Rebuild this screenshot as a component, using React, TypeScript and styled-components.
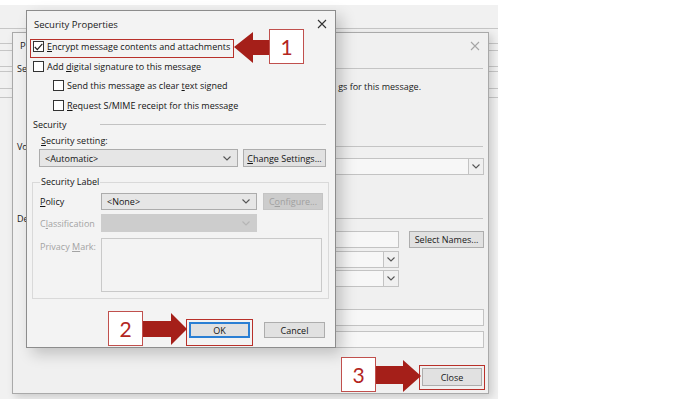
import React from "react";
import styled, { createGlobalStyle } from "styled-components";

const Global = createGlobalStyle`
  html, body { margin: 0; padding: 0; background: #ffffff; }
  body { font-family: "Open Sans", "Noto Sans", sans-serif; }
  * { box-sizing: border-box; }
`;

const Desktop = styled.div`
  position: relative;
  width: 700px;
  height: 399px;
  overflow: hidden;
  background: #ffffff;
`;

/* ---------- outer (backmost) window ---------- */
const Backdrop = styled.div`
  position: absolute;
  left: 0;
  top: 5px;
  width: 498px;
  height: 394px;
  background: #f1f1f1;
  display: flex;
  flex-direction: column;
`;

const BackLine = styled.div<{ $mt: number }>`
  flex: none;
  height: 1px;
  background: #c6c6c6;
  margin-top: ${(p) => p.$mt}px;
`;

/* ---------- shared window parts ---------- */
const TitleBar = styled.div<{ $h: number; $pl: number }>`
  flex: none;
  height: ${(p) => p.$h}px;
  display: flex;
  align-items: center;
  justify-content: space-between;
  padding: 0 8px 0 ${(p) => p.$pl}px;
`;

const TitleText = styled.span`
  font-size: 9.5px;
  color: #1a1a1a;
  white-space: nowrap;
`;

/* the part of a label that peeks out from under the front dialog */
const Peek = styled.span`
  flex: none;
  white-space: nowrap;
`;

const CloseGlyph = styled.svg<{ $faded?: boolean }>`
  width: 10px;
  height: 10px;
  stroke: ${(p) => (p.$faded ? "#a5a5a5" : "#333")};
  stroke-width: 1.1;
`;

/* a caption with one access-key letter underlined */
const Caption = styled.span`
  display: inline-flex;
  white-space: pre;
`;

const Key = styled.span`
  text-decoration: underline;
  text-underline-offset: 1px;
  text-decoration-thickness: 1px;
`;

const Mnemonic = ({ pre = "", k, post = "" }: { pre?: string; k: string; post?: string }) => (
  <Caption>
    {pre && <span>{pre}</span>}
    <Key>{k}</Key>
    {post && <span>{post}</span>}
  </Caption>
);

/* ---------- properties window (middle) ---------- */
const PropWindow = styled.div`
  position: absolute;
  left: 12px;
  top: 32px;
  width: 477px;
  height: 362px;
  background: #f0f0f0;
  border: 1px solid #a9a9a9;
  box-shadow: 3px 3px 8px rgba(0, 0, 0, 0.16);
  display: flex;
  flex-direction: column;
  font-size: 9px;
  color: #1a1a1a;
`;

const SectionHead = styled.div<{ $mt: number }>`
  flex: none;
  height: 20px;
  margin-top: ${(p) => p.$mt}px;
  display: flex;
  align-items: center;
  gap: 6px;
  padding: 0 5px 0 4px;
`;

const SectionLine = styled.div`
  flex: 1;
  height: 1px;
  background: #c4c4c4;
`;

const PropRow = styled.div<{ $mt: number; $h: number }>`
  flex: none;
  height: ${(p) => p.$h}px;
  margin-top: ${(p) => p.$mt}px;
  display: flex;
  align-items: center;
  justify-content: flex-end;
  gap: 10px;
  padding: 0 4px 0 16px;
`;

const InfoText = styled.span`
  margin-right: 63px;
  white-space: nowrap;
`;

const Field = styled.div<{ $w: number }>`
  flex: none;
  width: ${(p) => p.$w}px;
  height: 100%;
  background: #f7f7f7;
  border: 1px solid #c3c3c3;
  display: flex;
  align-items: stretch;
  justify-content: flex-end;
`;

const Spacer = styled.div<{ $w: number }>`
  flex: none;
  width: ${(p) => p.$w}px;
`;

const ChevBox = styled.div`
  width: 15px;
  border-left: 1px solid #c3c3c3;
  display: flex;
  align-items: center;
  justify-content: center;
  background: #f0f0f0;
`;

const Chev = styled.svg<{ $c?: string }>`
  width: 8px;
  height: 5px;
  fill: none;
  stroke: ${(p) => p.$c || "#555"};
  stroke-width: 1.1;
`;

const PlainButton = styled.div<{ $w: number }>`
  flex: none;
  width: ${(p) => p.$w}px;
  height: 100%;
  background: #e1e1e1;
  border: 1px solid #adadad;
  display: flex;
  align-items: center;
  justify-content: center;
  font-size: 9px;
  color: #1a1a1a;
`;

const FootRow = styled.div`
  flex: none;
  height: 18px;
  margin-top: 20px;
  display: flex;
  justify-content: flex-end;
  padding-right: 6px;
`;

/* ---------- security properties dialog (front) ---------- */
const Dialog = styled.div`
  position: absolute;
  left: 26px;
  top: 10px;
  width: 310px;
  height: 338px;
  background: #f3f3f3;
  border: 1px solid #8c8c8c;
  box-shadow: 6px 6px 14px rgba(0, 0, 0, 0.2);
  display: flex;
  flex-direction: column;
  font-size: 9px;
  color: #141414;
`;

const CheckRow = styled.div<{ $indent: number }>`
  flex: none;
  height: 19.5px;
  display: flex;
  align-items: center;
  gap: 3px;
  padding-left: ${(p) => p.$indent}px;
  white-space: nowrap;
`;

const Box = styled.span`
  flex: none;
  width: 11px;
  height: 11px;
  background: #fff;
  border: 1px solid #333;
  display: flex;
  align-items: center;
  justify-content: center;
`;

const Tick = styled.svg`
  width: 9px;
  height: 8px;
  fill: none;
  stroke: #222;
  stroke-width: 1.2;
`;

const GroupHead = styled.div`
  flex: none;
  height: 18px;
  display: flex;
  align-items: center;
  padding: 0 9px 0 6px;
`;

const GroupTitle = styled.span`
  width: 67px;
`;

const GroupLine = styled.div`
  flex: 1;
  height: 1px;
  background: #c2c2c2;
`;

const SubLabel = styled.div`
  flex: none;
  height: 14px;
  display: flex;
  align-items: center;
  padding-left: 14px;
`;

const ComboRow = styled.div`
  flex: none;
  height: 18px;
  margin-top: 2px;
  display: flex;
  gap: 5px;
  padding-left: 12px;
`;

const Combo = styled.div<{ $w: number; $disabled?: boolean }>`
  flex: none;
  width: ${(p) => p.$w}px;
  height: 100%;
  background: ${(p) => (p.$disabled ? "#cdcdcd" : "#e6e6e6")};
  border: 1px solid ${(p) => (p.$disabled ? "#cdcdcd" : "#acacac")};
  display: flex;
  align-items: center;
  justify-content: space-between;
  padding: 0 6px 0 5px;
  color: #141414;
`;

const DlgButton = styled.div<{ $w: number; $disabled?: boolean; $default?: boolean }>`
  flex: none;
  width: ${(p) => p.$w}px;
  height: 100%;
  background: ${(p) => (p.$disabled ? "#cccccc" : "#e1e1e1")};
  border: 1px solid
    ${(p) => (p.$default ? "#2a7fd4" : p.$disabled ? "#c4c4c4" : "#adadad")};
  box-shadow: ${(p) => (p.$default ? "inset 0 0 0 1px #2a7fd4" : "none")};
  color: ${(p) => (p.$disabled ? "#a0a0a0" : "#141414")};
  display: flex;
  align-items: center;
  justify-content: center;
  white-space: nowrap;
`;

const LabelGroup = styled.fieldset`
  flex: none;
  width: 297px;
  margin: 8px 0 0 5px;
  padding: 4px 6px 6px 7px;
  border: 1px solid #d9d9d9;
  display: flex;
  flex-direction: column;
  min-inline-size: 0;
`;

const Legend = styled.legend`
  padding: 0 1px;
  line-height: 14px;
  font-size: 9px;
  color: #141414;
`;

const LabelRow = styled.div<{ $mt: number; $h: number }>`
  height: ${(p) => p.$h}px;
  margin-top: ${(p) => p.$mt}px;
  display: flex;
  align-items: flex-start;
  gap: 6px;
`;

const RowName = styled.span<{ $disabled?: boolean; $h: number }>`
  flex: none;
  width: 55px;
  height: ${(p) => p.$h}px;
  display: flex;
  align-items: center;
  color: ${(p) => (p.$disabled ? "#a3a3a3" : "#141414")};
  white-space: nowrap;
`;

const Memo = styled.div`
  width: 223px;
  height: 100%;
  border: 1px solid #c9c9c9;
  background: #f3f3f3;
`;

const ButtonRow = styled.div`
  flex: none;
  height: 16px;
  margin-top: 23px;
  display: flex;
  justify-content: flex-end;
  gap: 14px;
  padding-right: 10px;
`;

/* ---------- annotations ---------- */
const Highlight = styled.div<{ $x: number; $y: number; $w: number; $h: number }>`
  position: absolute;
  left: ${(p) => p.$x}px;
  top: ${(p) => p.$y}px;
  width: ${(p) => p.$w}px;
  height: ${(p) => p.$h}px;
  border: 1.5px solid #b8302a;
`;

const StepBadge = styled.div<{ $x: number; $y: number }>`
  position: absolute;
  left: ${(p) => p.$x}px;
  top: ${(p) => p.$y}px;
  width: 35px;
  height: 35px;
  background: #fff;
  border: 1px solid #c0504d;
  display: flex;
  align-items: center;
  justify-content: center;
  font-family: "Lato", "Open Sans", sans-serif;
  font-size: 21px;
  color: #b3261e;
`;

const Arrow = styled.svg<{ $x: number; $y: number }>`
  position: absolute;
  left: ${(p) => p.$x}px;
  top: ${(p) => p.$y}px;
  overflow: visible;
`;

const X = ({ faded }: { faded?: boolean }) => (
  <CloseGlyph viewBox="0 0 10 10" $faded={faded}>
    <path d="M1 1 L9 9 M9 1 L1 9" />
  </CloseGlyph>
);

const Down = ({ c }: { c?: string }) => (
  <Chev viewBox="0 0 8 5" $c={c}>
    <path d="M0.5 0.5 L4 4 L7.5 0.5" />
  </Chev>
);

const Check = ({ checked }: { checked?: boolean }) => (
  <Box>
    {checked && (
      <Tick viewBox="0 0 9 8">
        <path d="M0.8 4 L3.3 6.6 L8.3 0.8" />
      </Tick>
    )}
  </Box>
);

const arrowFill = "#a51f19";

export default function App() {
  return (
    <Desktop>
      <Global />
      <Backdrop>
        <BackLine $mt={23} />
        <BackLine $mt={14} />
        <BackLine $mt={6} />
        <BackLine $mt={15} />
        <BackLine $mt={4} />
        <BackLine $mt={16} />
        <BackLine $mt={8} />
      </Backdrop>

      <PropWindow>
        <TitleBar $h={25} $pl={7}>
          <TitleText>P</TitleText>
          <X faded />
        </TitleBar>
        <SectionHead $mt={0}>
          <Peek>Se</Peek>
          <SectionLine />
        </SectionHead>
        <PropRow $mt={0} $h={16}>
          <InfoText>gs for this message.</InfoText>
        </PropRow>
        <SectionHead $mt={42}>
          <Peek>Vo</Peek>
          <SectionLine />
        </SectionHead>
        <PropRow $mt={2} $h={17}>
          <Field $w={300}>
            <ChevBox>
              <Down />
            </ChevBox>
          </Field>
        </PropRow>
        <SectionHead $mt={33}>
          <Peek>De</Peek>
          <SectionLine />
        </SectionHead>
        <PropRow $mt={3} $h={17}>
          <Field $w={220} />
          <PlainButton $w={75}>Select Names...</PlainButton>
        </PropRow>
        <PropRow $mt={3} $h={17}>
          <Field $w={120}>
            <ChevBox>
              <Down />
            </ChevBox>
          </Field>
          <Spacer $w={75} />
        </PropRow>
        <PropRow $mt={2} $h={17}>
          <Field $w={120}>
            <ChevBox>
              <Down />
            </ChevBox>
          </Field>
          <Spacer $w={75} />
        </PropRow>
        <PropRow $mt={22} $h={17}>
          <Field $w={300} />
        </PropRow>
        <PropRow $mt={5} $h={17}>
          <Field $w={300} />
        </PropRow>
        <FootRow>
          <PlainButton $w={60}>Close</PlainButton>
        </FootRow>
      </PropWindow>

      <Dialog>
        <TitleBar $h={26} $pl={7}>
          <TitleText>Security Properties</TitleText>
          <X />
        </TitleBar>
        <CheckRow $indent={6}>
          <Check checked />
          <Mnemonic k="E" post="ncrypt message contents and attachments" />
        </CheckRow>
        <CheckRow $indent={6}>
          <Check />
          <Mnemonic pre="Add " k="d" post="igital signature to this message" />
        </CheckRow>
        <CheckRow $indent={26}>
          <Check />
          <Mnemonic pre="Send this message as clear " k="t" post="ext signed" />
        </CheckRow>
        <CheckRow $indent={26}>
          <Check />
          <Mnemonic k="R" post="equest S/MIME receipt for this message" />
        </CheckRow>
        <GroupHead>
          <GroupTitle>Security</GroupTitle>
          <GroupLine />
        </GroupHead>
        <SubLabel>
          <Mnemonic k="S" post="ecurity setting:" />
        </SubLabel>
        <ComboRow>
          <Combo $w={199}>
            <span>&lt;Automatic&gt;</span>
            <Down />
          </Combo>
          <DlgButton $w={83}>
            <Mnemonic k="C" post="hange Settings..." />
          </DlgButton>
        </ComboRow>
        <LabelGroup>
          <Legend>Security Label</Legend>
          <LabelRow $mt={0} $h={17}>
            <RowName $h={17}>
              <Mnemonic k="P" post="olicy" />
            </RowName>
            <Combo $w={156}>
              <span>&lt;None&gt;</span>
              <Down />
            </Combo>
            <DlgButton $w={60} $disabled>
              <Mnemonic pre="C" k="o" post="nfigure..." />
            </DlgButton>
          </LabelRow>
          <LabelRow $mt={4} $h={18}>
            <RowName $h={18} $disabled>
              <Mnemonic pre="C" k="l" post="assification" />
            </RowName>
            <Combo $w={156} $disabled>
              <span />
              <Down c="#b5b5b5" />
            </Combo>
          </LabelRow>
          <LabelRow $mt={6} $h={54}>
            <RowName $h={16} $disabled>
              <Mnemonic pre="Privacy " k="M" post="ark:" />
            </RowName>
            <Memo />
          </LabelRow>
        </LabelGroup>
        <ButtonRow>
          <DlgButton $w={61} $default>
            OK
          </DlgButton>
          <DlgButton $w={61}>Cancel</DlgButton>
        </ButtonRow>
      </Dialog>

      {/* annotations */}
      <Highlight $x={30} $y={39} $w={204} $h={19} />
      <Highlight $x={186} $y={319} $w={67} $h={27} />
      <Highlight $x={419} $y={365} $w={66} $h={25} />

      <Arrow $x={233} $y={31} width={38} height={34}>
        <polygon
          points="1,16 20,1 20,9 37,9 37,24 20,24 20,32"
          fill={arrowFill}
        />
      </Arrow>
      <Arrow $x={143} $y={312} width={45} height={34}>
        <polygon
          points="0,9 28,9 28,1 44,17 28,33 28,25 0,25"
          fill={arrowFill}
        />
      </Arrow>
      <Arrow $x={376} $y={359} width={46} height={34}>
        <polygon
          points="0,7 27,7 27,1 45,17 27,33 27,25 0,25"
          fill={arrowFill}
        />
      </Arrow>

      <StepBadge $x={269} $y={29}>1</StepBadge>
      <StepBadge $x={108} $y={311}>2</StepBadge>
      <StepBadge $x={341} $y={357}>3</StepBadge>
    </Desktop>
  );
}
